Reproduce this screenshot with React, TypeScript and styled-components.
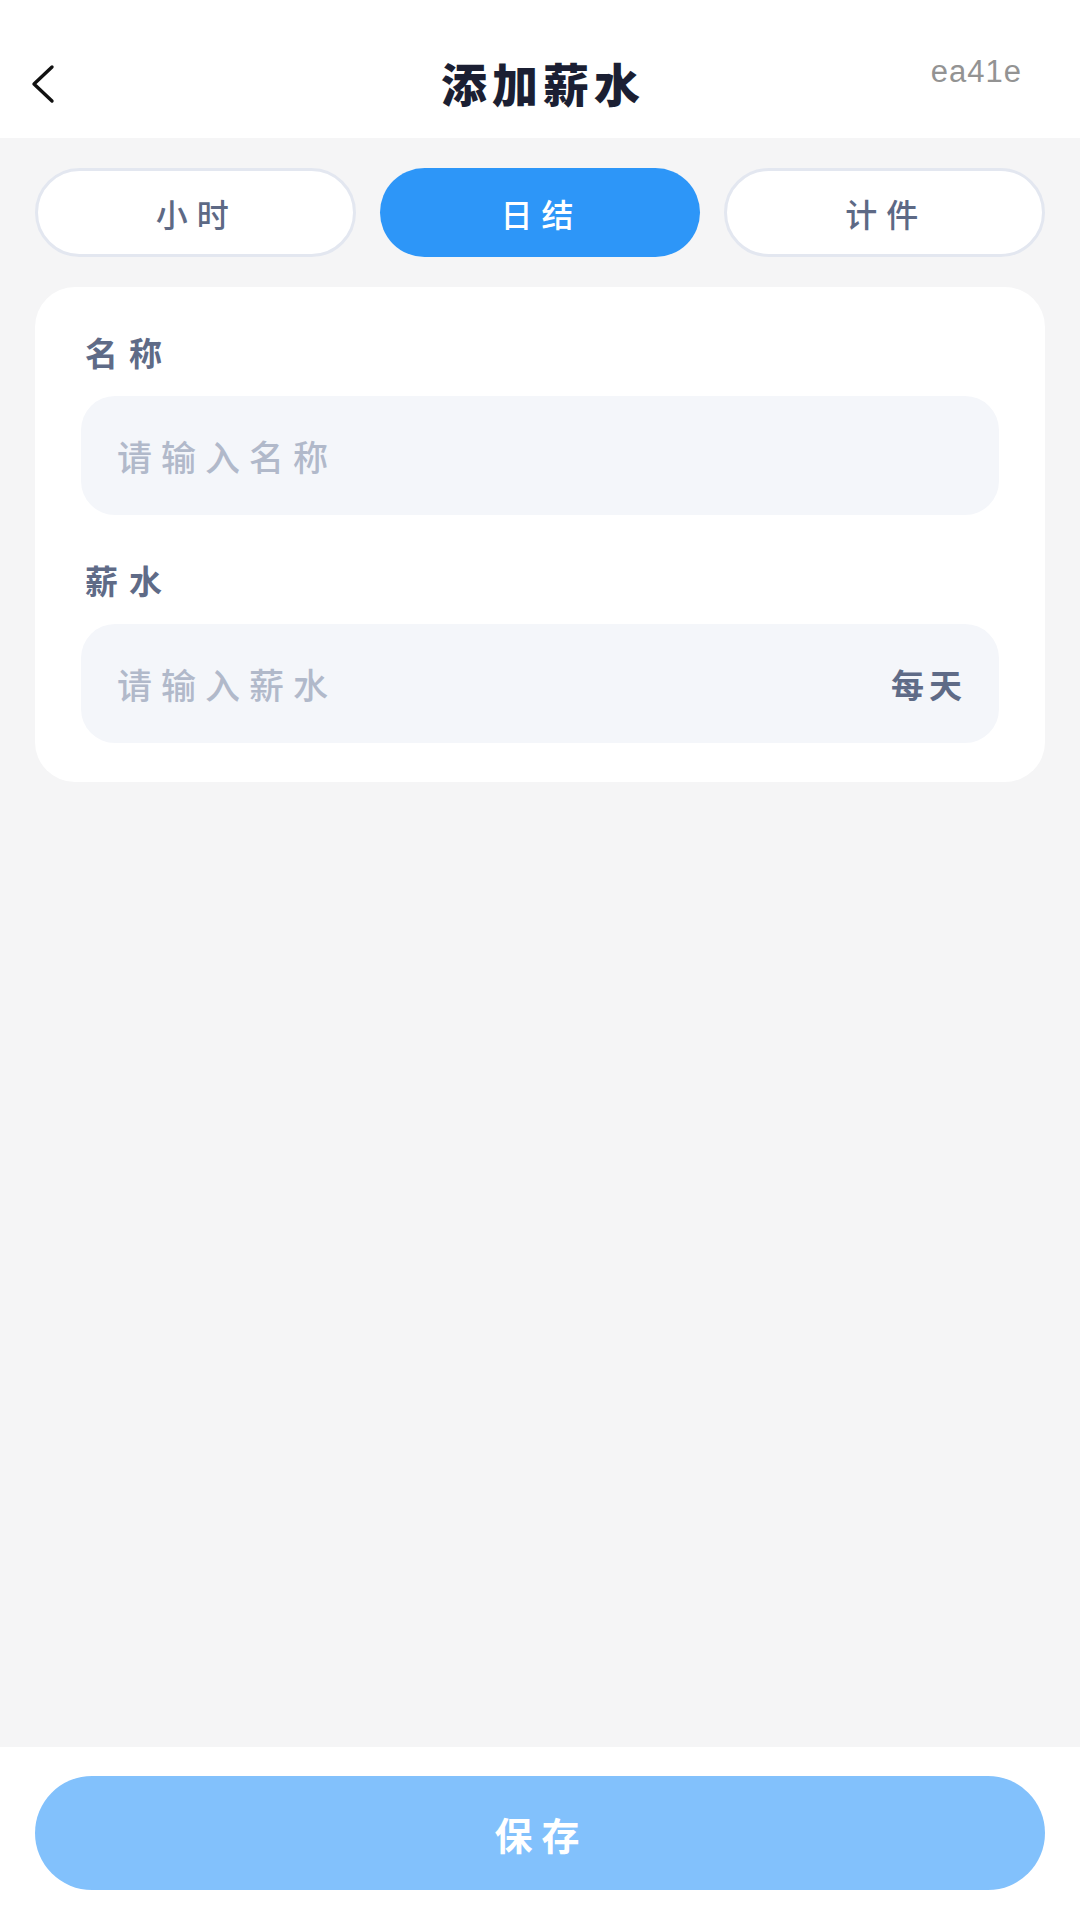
import React, { useState } from "react";
import styled, { createGlobalStyle } from "styled-components";

const Global = createGlobalStyle`
  html, body { margin: 0; padding: 0; background: #f5f5f6; }
  body { font-family: "Noto Sans CJK SC", "Noto Sans", sans-serif; }
  * { box-sizing: border-box; }
`;

const Page = styled.div`
  width: 1080px;
  min-height: 1920px;
  display: flex;
  flex-direction: column;
  background: #f5f5f6;
`;

const Header = styled.header`
  height: 138px;
  background: #ffffff;
  display: grid;
  grid-template-columns: 140px 1fr 140px;
  align-items: center;
  padding: 30px 24px 0 30px;
`;

const BackButton = styled.button`
  border: none;
  background: none;
  padding: 0;
  width: 40px;
  height: 50px;
  display: flex;
  align-items: center;
  justify-content: flex-start;
  cursor: pointer;
`;

const Title = styled.h1`
  margin: 0;
  padding-bottom: 5px;
  text-align: center;
  font-size: 46px;
  font-weight: 900;
  letter-spacing: 5px;
  color: #1b1f33;
  line-height: 1;
`;

const Tag = styled.span`
  justify-self: end;
  align-self: start;
  margin-top: 26px;
  margin-right: 34px;
  font-family: "Liberation Sans", sans-serif;
  font-size: 31px;
  color: #939393;
  letter-spacing: 1px;
  line-height: 1;
`;

const Content = styled.main`
  flex: 1;
  display: flex;
  flex-direction: column;
  gap: 30px;
  padding: 30px 35px 0 35px;
`;

const Tabs = styled.div`
  display: grid;
  grid-template-columns: repeat(3, 1fr);
  gap: 24px;
`;

const Tab = styled.button<{ $active?: boolean }>`
  height: 89px;
  border-radius: 45px;
  border: ${(p) => (p.$active ? "none" : "3px solid #e3e7f0")};
  background: ${(p) => (p.$active ? "#2d96f8" : "#ffffff")};
  color: ${(p) => (p.$active ? "#ffffff" : "#5d6985")};
  font-family: "Noto Sans CJK SC", sans-serif;
  font-size: 32px;
  font-weight: 500;
  letter-spacing: 9px;
  padding-left: 9px;
  cursor: pointer;
`;

const Card = styled.section`
  background: #ffffff;
  border-radius: 40px;
  padding: 42px 46px 39px 46px;
  display: flex;
  flex-direction: column;
`;

const Label = styled.label`
  font-size: 33px;
  font-weight: 700;
  color: #5f6b87;
  letter-spacing: 11px;
  line-height: 46px;
  padding-left: 4px;
  margin-bottom: 21px;
`;

const Field = styled.div<{ $last?: boolean }>`
  height: 119px;
  border-radius: 34px;
  background: #f4f6fa;
  display: flex;
  align-items: center;
  padding: 0 32px 0 36px;
  margin-bottom: ${(p) => (p.$last ? "0" : "42px")};
`;

const Input = styled.input`
  flex: 1;
  min-width: 0;
  border: none;
  outline: none;
  background: transparent;
  font-family: "Noto Sans CJK SC", sans-serif;
  font-size: 35px;
  font-weight: 500;
  letter-spacing: 9px;
  color: #333;
  padding: 0;
  &::placeholder {
    color: #b1b9ca;
  }
`;

const Unit = styled.span`
  font-size: 33px;
  font-weight: 700;
  color: #5f6b87;
  letter-spacing: 5px;
`;

const Footer = styled.footer`
  height: 173px;
  background: #ffffff;
  padding: 29px 35px 0 35px;
`;

const SaveButton = styled.button`
  width: 100%;
  height: 114px;
  border: none;
  border-radius: 57px;
  background: #82c1fc;
  color: #ffffff;
  font-family: "Noto Sans CJK SC", sans-serif;
  font-size: 38px;
  font-weight: 700;
  letter-spacing: 9px;
  padding-left: 9px;
  cursor: pointer;
`;

const tabs = ["小时", "日结", "计件"];

export default function App() {
  const [active, setActive] = useState(1);
  return (
    <Page>
      <Global />
      <Header>
        <BackButton aria-label="返回">
          <svg width="26" height="40" viewBox="0 0 26 40" fill="none">
            <path d="M22 3 L4 20 L22 37" stroke="#111" strokeWidth="3.4" strokeLinecap="round" strokeLinejoin="round" />
          </svg>
        </BackButton>
        <Title>添加薪水</Title>
        <Tag>ea41e</Tag>
      </Header>
      <Content>
        <Tabs>
          {tabs.map((t, i) => (
            <Tab key={t} $active={i === active} onClick={() => setActive(i)}>
              {t}
            </Tab>
          ))}
        </Tabs>
        <Card>
          <Label>名称</Label>
          <Field>
            <Input placeholder="请输入名称" />
          </Field>
          <Label>薪水</Label>
          <Field $last>
            <Input placeholder="请输入薪水" />
            <Unit>每天</Unit>
          </Field>
        </Card>
      </Content>
      <Footer>
        <SaveButton>保存</SaveButton>
      </Footer>
    </Page>
  );
}
